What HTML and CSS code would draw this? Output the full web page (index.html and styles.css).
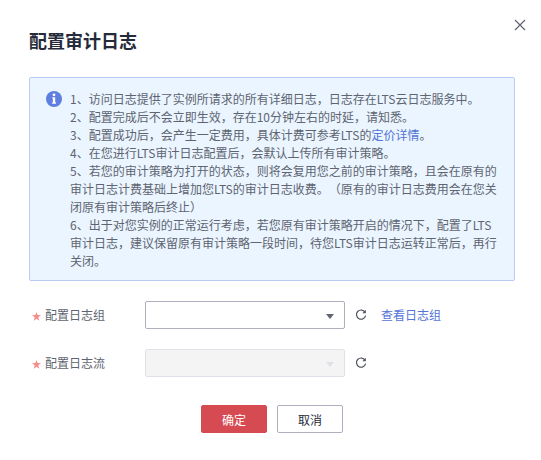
FILE: index.html
```html
<!DOCTYPE html>
<html lang="zh-CN">
<head>
<meta charset="utf-8">
<title>配置审计日志</title>
<link rel="stylesheet" href="styles.css">
</head>
<body>
<div class="dialog">
  <button class="close" aria-label="关闭">
    <svg width="12" height="12" viewBox="0 0 12 12"><path d="M1 1L11 11M11 1L1 11" stroke="#5e6470" stroke-width="1.2" fill="none"/></svg>
  </button>
  <h1 class="title">配置审计日志</h1>
  <div class="notice">
    <svg class="info" width="16" height="16" viewBox="0 0 16 16"><circle cx="8" cy="8" r="8" fill="#5f7fe0"/><circle cx="8" cy="3.8" r="1.4" fill="#fff"/><path d="M6.3 6.3H9.2V11.6H10V12.8H6.1V11.6H6.9V7.5H6.3Z" fill="#fff"/></svg>
    <div class="notice-text">
      <p>1、访问日志提供了实例所请求的所有详细日志，日志存在LTS云日志服务中。</p>
      <p>2、配置完成后不会立即生效，存在10分钟左右的时延，请知悉。</p>
      <p>3、配置成功后，会产生一定费用，具体计费可参考LTS的<a class="link">定价详情</a>。</p>
      <p>4、在您进行LTS审计日志配置后，会默认上传所有审计策略。</p>
      <p>5、若您的审计策略为打开的状态，则将会复用您之前的审计策略，且会在原有的审计日志计费基础上增加您LTS的审计日志收费。（原有的审计日志费用会在您关闭原有审计策略后终止）</p>
      <p>6、出于对您实例的正常运行考虑，若您原有审计策略开启的情况下，配置了LTS审计日志，建议保留原有审计策略一段时间，待您LTS审计日志运转正常后，再行关闭。</p>
    </div>
  </div>
  <div class="form">
    <div class="row">
      <label class="label"><svg class="star" width="9" height="9" viewBox="0 0 10 10"><path d="M5 0L6.2 3.4L10 3.6L7 5.9L8.1 9.6L5 7.5L1.9 9.6L3 5.9L0 3.6L3.8 3.4Z" fill="#f88a8a"/></svg>配置日志组</label>
      <div class="select"><span class="arrow"></span></div>
      <svg class="refresh" width="12" height="12" viewBox="0 0 12 12"><path d="M10 3.2A4.6 4.6 0 1 0 10.6 6.5" stroke="#4d525c" stroke-width="1.2" fill="none"/><path d="M10.8 0.8V4.2H7.4Z" fill="#4d525c"/></svg>
      <a class="link view">查看日志组</a>
    </div>
    <div class="row">
      <label class="label"><svg class="star" width="9" height="9" viewBox="0 0 10 10"><path d="M5 0L6.2 3.4L10 3.6L7 5.9L8.1 9.6L5 7.5L1.9 9.6L3 5.9L0 3.6L3.8 3.4Z" fill="#f88a8a"/></svg>配置日志流</label>
      <div class="select disabled"><span class="arrow"></span></div>
      <svg class="refresh" width="12" height="12" viewBox="0 0 12 12"><path d="M10 3.2A4.6 4.6 0 1 0 10.6 6.5" stroke="#4d525c" stroke-width="1.2" fill="none"/><path d="M10.8 0.8V4.2H7.4Z" fill="#4d525c"/></svg>
    </div>
  </div>
  <div class="actions">
    <button class="btn primary">确定</button>
    <button class="btn">取消</button>
  </div>
</div>
</body>
</html>
```
FILE: styles.css
```css
* { box-sizing: border-box; }
html, body { margin: 0; padding: 0; background: #fff; }
body { width: 541px; height: 460px; overflow: hidden; font-family: "Noto Sans CJK SC", "Liberation Sans", sans-serif; color: #5e6470; font-size: 12px; text-spacing-trim: space-all; }
.dialog { position: relative; padding: 29px 26px 0 29px; }
.close { position: absolute; top: 19px; right: 15px; width: 12px; height: 12px; padding: 0; border: 0; background: none; display: block; line-height: 0; }
.title { margin: 0 0 25px; font-size: 18px; line-height: 23px; font-weight: 700; color: #252b3a; }
.notice { display: flex; width: 486px; height: 204px; padding: 12px 10px 0 16px; background: #eaf5ff; border: 1px solid #b9caf5; border-radius: 2px; }
.info { flex: none; margin: 1px 8px 0 0; }
.notice-text { width: 432px; line-height: 18px; margin-top: 0; }
.notice-text p { margin: 0; }
.link { color: #5473d6; }
.form { margin-top: 20px; display: flex; flex-direction: column; gap: 20px; }
.row { display: flex; align-items: center; height: 28px; }
.label { width: 111px; padding: 0 0 1px 3px; color: #5e6470; line-height: 18px; display: flex; align-items: center; }
.star { flex: none; margin: 3px 4px 0 0; }
.select { position: relative; width: 200px; height: 28px; margin-left: 5px; background: #fff; border: 1px solid #aeb0bd; border-radius: 2px; }
.select.disabled { background: #f4f4f5; border-color: #dfe1e8; }
.arrow { position: absolute; right: 10px; top: 12px; border-left: 4px solid transparent; border-right: 4px solid transparent; border-top: 5px solid #5e6470; }
.disabled .arrow { border-top-color: #dfe1e8; }
.refresh { margin: -1px 0 0 10px; }
.view { margin: -2px 0 0 14px; }
.actions { display: flex; justify-content: center; gap: 10px; margin-top: 28px; width: 486px; }
.btn { width: 66px; height: 28px; padding: 0; font: inherit; color: #252b3a; background: #fff; border: 1px solid #aeb0bd; border-radius: 2px; }
.btn.primary { background: #d64a52; border-color: #d64a52; color: #fff; }
```
